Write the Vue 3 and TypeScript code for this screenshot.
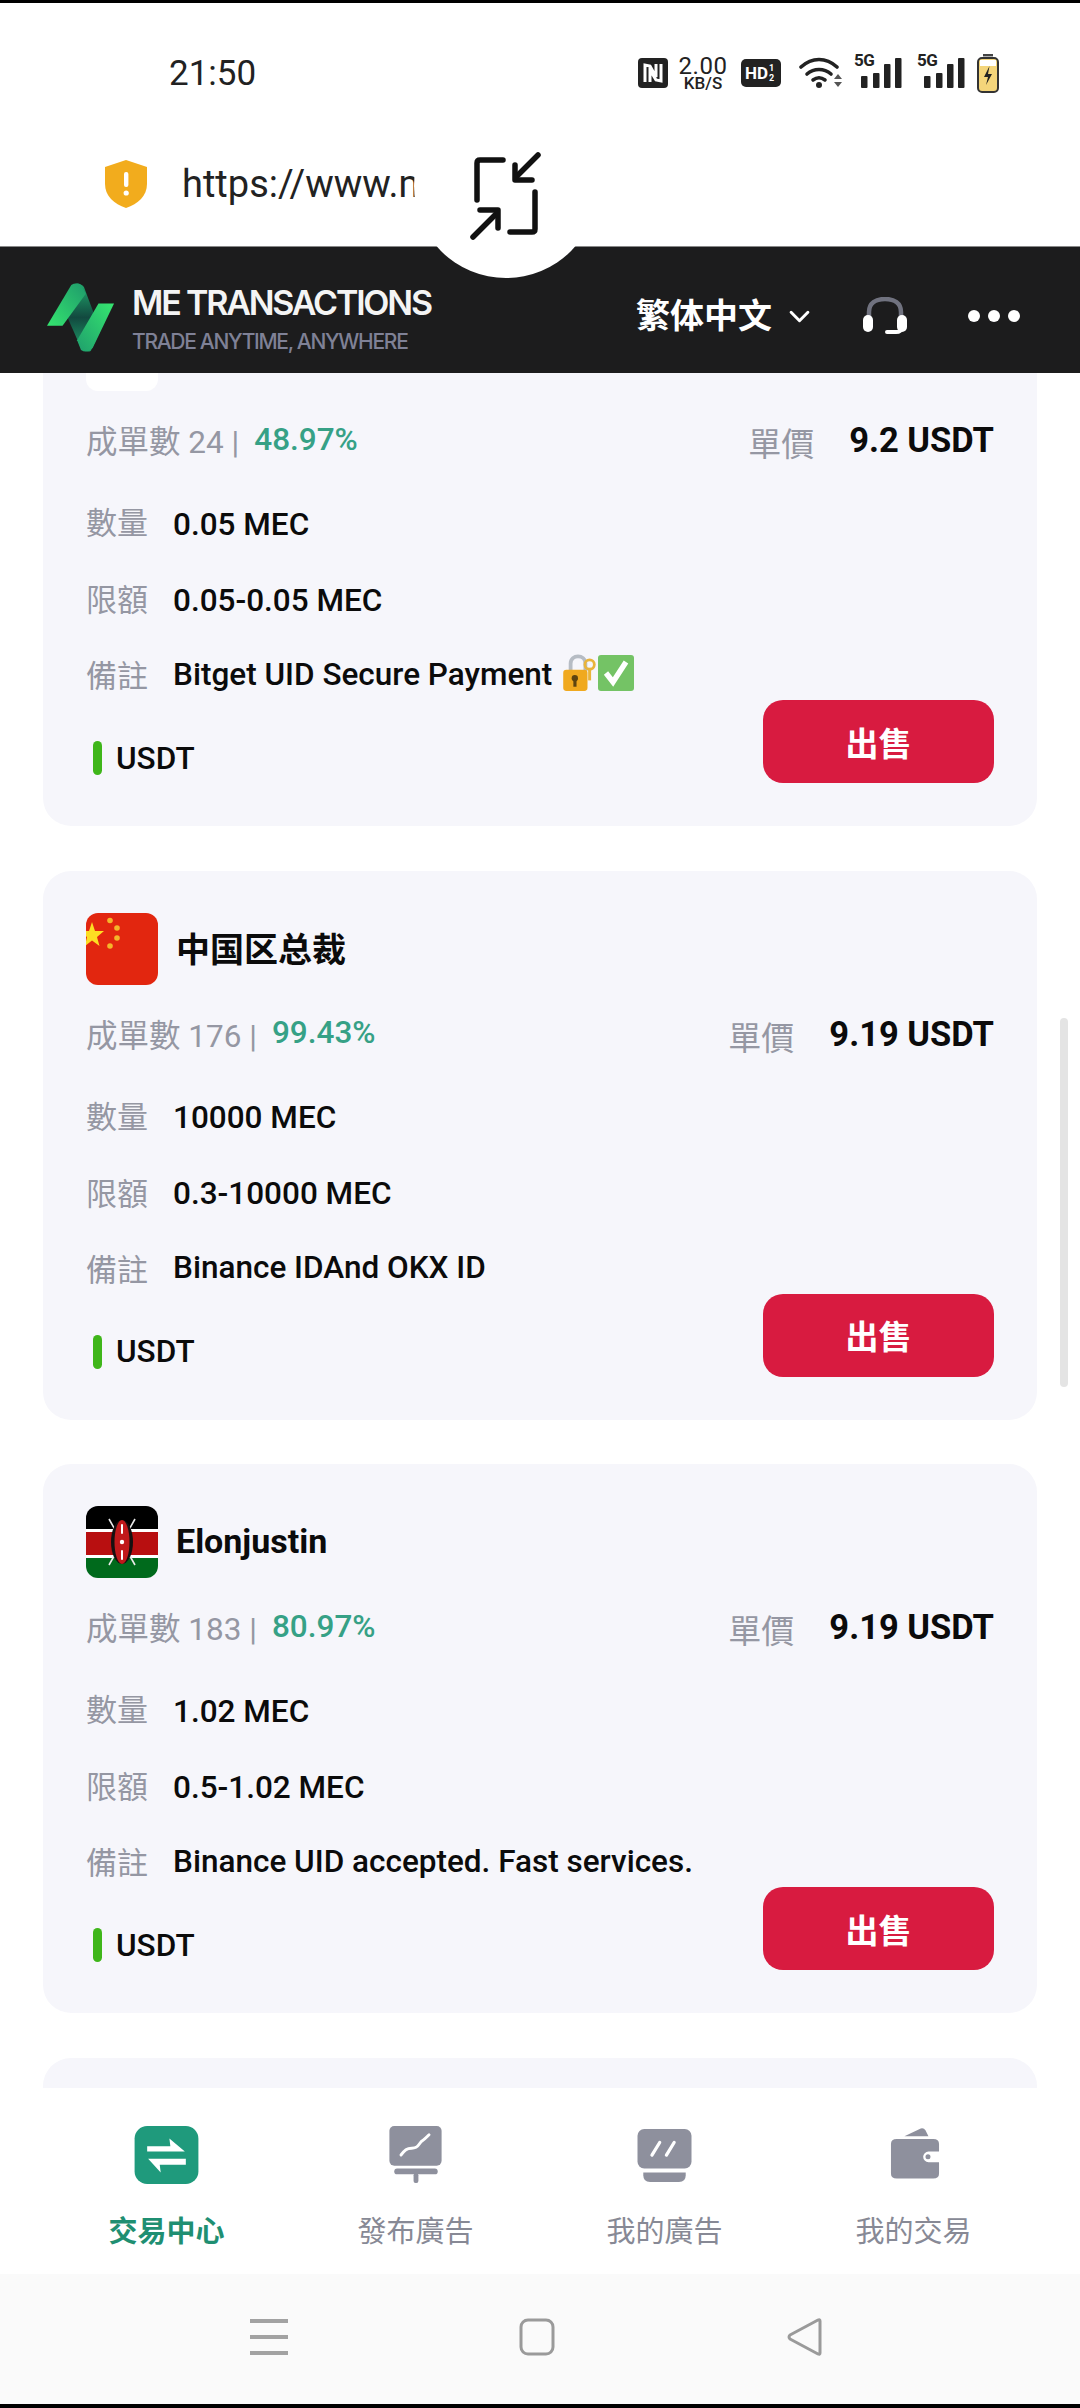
<script setup lang="ts">
interface Offer {
  name: string
  flag: 'blank' | 'cn' | 'ke'
  orders: number
  rate: string
  price: string
  amount: string
  limit: string
  note: string
  secure?: boolean
}

const offers: Offer[] = [
  { name: '', flag: 'blank', orders: 24, rate: '48.97%', price: '9.2 USDT', amount: '0.05 MEC', limit: '0.05-0.05 MEC', note: 'Bitget UID Secure Payment', secure: true },
  { name: '中国区总裁', flag: 'cn', orders: 176, rate: '99.43%', price: '9.19 USDT', amount: '10000 MEC', limit: '0.3-10000 MEC', note: 'Binance IDAnd OKX ID' },
  { name: 'Elonjustin', flag: 'ke', orders: 183, rate: '80.97%', price: '9.19 USDT', amount: '1.02 MEC', limit: '0.5-1.02 MEC', note: 'Binance UID accepted. Fast services.' },
]

const tabs = ['交易中心', '發布廣告', '我的廣告', '我的交易']
</script>

<template>
  <div class="screen">
    <div class="status-bar">
      <span class="clock">21:50</span>
      <div class="status-icons">
        <svg class="i-nfc" viewBox="0 0 30 30">
          <rect width="30" height="30" rx="4" fill="#222" />
          <path d="M7 24V7l5 1 6 11V6m5 0v17l-5-1-6-10v12" fill="none" stroke="#fff" stroke-width="3" />
        </svg>
        <div class="speed"><b>2.00</b><small>KB/S</small></div>
        <div class="hd">HD<span class="hd-sub">1<br />2</span></div>
        <svg class="i-wifi" viewBox="0 0 44 32">
          <g fill="none" stroke="#222" stroke-width="3.6" stroke-linecap="round">
            <path d="M2 10c11-10 25-10 36 0" />
            <path d="M8 17c7-6 17-6 24 0" />
            <path d="M14 23c4-3 8-3 12 0" />
          </g>
          <circle cx="20" cy="28" r="3" fill="#222" />
          <path d="M35 22l4-5 4 5zM35 25l4 5 4-5z" fill="#555" />
        </svg>
        <div v-for="n in 2" :key="n" class="signal">
          <span class="five-g">5G</span>
          <svg class="i-bars" viewBox="0 0 44 32">
            <rect x="3" y="19" width="6.5" height="12" rx="1" fill="#222" />
            <rect x="15" y="16" width="6.5" height="15" rx="1" fill="#222" />
            <rect x="26" y="7" width="6.5" height="24" rx="1" fill="#222" />
            <rect x="37" y="1" width="6.5" height="30" rx="1" fill="#222" />
          </svg>
        </div>
        <svg class="i-battery" viewBox="0 0 22 39">
          <rect x="6" y="0" width="10" height="2.4" fill="#444" />
          <rect x="1" y="4" width="20" height="34" rx="4" fill="#f4d57a" stroke="#333" stroke-width="2" />
          <rect x="3" y="6" width="16" height="6" fill="#fff" />
          <path d="M12.5 12L7 23h4l-2 8 6-11h-4z" fill="#222" />
        </svg>
      </div>
    </div>

    <div class="url-bar">
      <svg class="i-shield" viewBox="0 0 44 50">
        <path d="M22 1l21 7v17c0 12-9 20-21 24C10 45 1 37 1 25V8z" fill="#f2ac1d" />
        <rect x="20" y="13" width="4.4" height="15" rx="2" fill="#fff" />
        <circle cx="22.2" cy="34" r="2.6" fill="#fff" />
      </svg>
      <span class="url">https://www.me-transactions.com</span>
    </div>

    <header class="top-nav">
      <div class="brand">
        <svg class="i-logo" viewBox="0 0 70 74">
          <defs>
            <linearGradient id="logoA" x1="0" y1="1" x2="1" y2="0">
              <stop offset="0" stop-color="#34e56f" />
              <stop offset="1" stop-color="#1f9a6b" />
            </linearGradient>
            <linearGradient id="logoB" x1="0" y1="0" x2="0" y2="1">
              <stop offset="0" stop-color="#20a86c" />
              <stop offset="0.5" stop-color="#12493f" />
              <stop offset="1" stop-color="#1fa26b" />
            </linearGradient>
            <linearGradient id="logoC" x1="1" y1="0" x2="0" y2="1">
              <stop offset="0" stop-color="#36e670" />
              <stop offset="1" stop-color="#1f9f6c" />
            </linearGradient>
          </defs>
          <path d="M26 3Q33-1 38 5L55 50 45 71Q40 73 35 68L16 25z" fill="url(#logoB)" />
          <path d="M0 45L25 3Q30 0 35 3L40 12 16 45z" fill="url(#logoA)" />
          <path d="M53 22H69L47 68Q41 74 35 70L31 60z" fill="url(#logoC)" />
        </svg>
        <div class="brand-text">
          <div class="brand-name">ME TRANSACTIONS</div>
          <div class="brand-sub">TRADE ANYTIME, ANYWHERE</div>
        </div>
      </div>
      <div class="nav-right">
        <span class="lang">繁体中文</span>
        <svg class="i-chev" viewBox="0 0 20 12">
          <path d="M2 2l8 8 8-8" fill="none" stroke="#fff" stroke-width="2.8" stroke-linecap="round" stroke-linejoin="round" />
        </svg>
        <svg class="i-headset" viewBox="0 0 44 38">
          <path d="M6 20V15C6 6 13 2 22 2s16 4 16 13v5" fill="none" stroke="#70727f" stroke-width="4.5" />
          <rect x="0" y="18" width="10" height="17" rx="5" fill="#fff" />
          <rect x="34" y="18" width="10" height="17" rx="5" fill="#fff" />
          <path d="M38 31q0 4-5 4H24" fill="none" stroke="#fff" stroke-width="4" stroke-linecap="round" />
        </svg>
        <div class="dots"><i /><i /><i /></div>
      </div>
    </header>

    <div class="notch">
      <svg class="i-collapse" viewBox="0 0 72 88">
        <g fill="none" stroke="#111" stroke-width="5.5" stroke-linecap="round" stroke-linejoin="round">
          <path d="M7 48V11q0-3 3-3h23" />
          <path d="M68 3L46 25" />
          <path d="M45 13v15h17" />
          <path d="M65 40v37q0 3-3 3H40" />
          <path d="M3 85l24-24" />
          <path d="M10 58h18v18" />
        </g>
      </svg>
    </div>

    <main class="list">
      <article v-for="o in offers" :key="o.orders" class="card">
        <div class="card-head">
          <div class="flag" :class="'flag-' + o.flag">
            <svg v-if="o.flag === 'cn'" viewBox="0 0 72 72">
              <rect width="72" height="72" fill="#e2260f" />
              <polygon points="6,9 9,18 18,18 11,24 13.5,33 6,27.5 -1,33 1,24 -6,18 3,18" fill="#fdde23" />
              <g fill="#f5b52a">
                <circle cx="24" cy="7.5" r="2.8" />
                <circle cx="31" cy="15" r="2.8" />
                <circle cx="31" cy="25" r="2.8" />
                <circle cx="24" cy="33" r="2.8" />
              </g>
            </svg>
            <svg v-else-if="o.flag === 'ke'" viewBox="0 0 72 72">
              <rect width="72" height="25" fill="#000" />
              <rect y="25" width="72" height="25" fill="#b80f10" />
              <rect y="50" width="72" height="22" fill="#006a1c" />
              <rect y="23" width="72" height="3" fill="#fff" />
              <rect y="49" width="72" height="3" fill="#fff" />
              <path d="M23 13l26 46M49 13L23 59" stroke="#e9e9e9" stroke-width="1.6" />
              <ellipse cx="36" cy="36" rx="11" ry="22" fill="#161010" />
              <ellipse cx="36" cy="36" rx="7.5" ry="22" fill="#c1191b" />
              <g fill="#fff">
                <rect x="35" y="18" width="2" height="10" rx="1" />
                <circle cx="36" cy="36" r="2.2" />
                <rect x="35" y="44" width="2" height="10" rx="1" />
              </g>
            </svg>
          </div>
          <span class="name">{{ o.name }}</span>
        </div>

        <div class="stats">
          <div class="orders">
            <span>成單數 {{ o.orders }} |</span>
            <span class="rate">{{ o.rate }}</span>
          </div>
          <div class="price">
            <span class="label price-label">單價</span>
            <span class="price-val">{{ o.price }}</span>
          </div>
        </div>

        <div class="row row-amount"><span class="label">數量</span><span class="val">{{ o.amount }}</span></div>
        <div class="row row-limit"><span class="label">限額</span><span class="val">{{ o.limit }}</span></div>
        <div class="row row-note">
          <span class="label">備註</span>
          <span class="val">{{ o.note }}</span>
          <template v-if="o.secure">
            <svg class="emoji" viewBox="0 0 34 36">
              <path d="M10 16V9c0-9 14-9 14 0v7" fill="none" stroke="#b6bcc4" stroke-width="3.6" />
              <rect x="3" y="15" width="23" height="20" rx="3" fill="#f0a91f" />
              <circle cx="14" cy="23" r="3" fill="#5d4410" />
              <rect x="12.6" y="24" width="3" height="7" fill="#5d4410" />
              <circle cx="28" cy="10" r="4.5" fill="none" stroke="#e9b43a" stroke-width="2.6" />
              <rect x="26.6" y="13" width="2.8" height="12" fill="#e9b43a" />
            </svg>
            <svg class="emoji" viewBox="0 0 36 36">
              <rect width="36" height="36" rx="3" fill="#74c365" />
              <path d="M8 18l7 9 13-20" fill="none" stroke="#fff" stroke-width="5.4" />
            </svg>
          </template>
        </div>

        <div class="card-foot">
          <div class="coin"><i class="coin-bar" /><span>USDT</span></div>
          <button class="sell" type="button">出售</button>
        </div>
      </article>
      <article class="card" />
      <div class="scroll-thumb" />
    </main>

    <nav class="tabs">
      <div v-for="(t, i) in tabs" :key="t" class="tab" :class="{ active: i === 0 }">
        <div class="tab-icon">
          <svg v-if="i === 0" viewBox="0 0 66 60" class="i-swap">
            <rect width="66" height="60" rx="13" fill="#1f9a7c" />
            <path d="M13 21H37L36 13 52 26.5H13z" fill="#fff" />
            <path d="M53 34H14L27 48 26 40H53z" fill="#fff" />
          </svg>
          <svg v-else-if="i === 1" viewBox="0 0 54 60" class="i-chart">
            <rect width="54" height="41" rx="5" fill="#8e909d" />
            <path d="M12 30c4-5 6-7 11-7 7 0 7-4 10-7 3-2 5-4 8-7" fill="none" stroke="#fff" stroke-width="3" stroke-linecap="round" />
            <rect x="5" y="44" width="45" height="6" rx="3" fill="#8e909d" />
            <rect x="25" y="49" width="5" height="10" rx="2" fill="#8e909d" />
          </svg>
          <svg v-else-if="i === 2" viewBox="0 0 56 56" class="i-monitor">
            <rect width="56" height="41" rx="7" fill="#8e909d" />
            <path d="M15 27l8-13M30 27l8-13" fill="none" stroke="#fff" stroke-width="3.4" stroke-linecap="round" />
            <path d="M6 45h44v3q0 7-7 7H13q-7 0-7-7z" fill="#8e909d" />
          </svg>
          <svg v-else viewBox="0 0 52 54" class="i-wallet">
            <path d="M15 9L32 1q3-1 5 2l3 6z" fill="#8e909d" />
            <path d="M7 12h38q6 0 6 5v8H40a5.5 5.5 0 0 0 0 11h11v12q0 5-6 5H7q-6 0-6-5V17q0-5 6-5z" fill="#8e909d" />
            <circle cx="39.5" cy="30.5" r="2.6" fill="#8e909d" />
          </svg>
        </div>
        <span class="tab-label">{{ t }}</span>
      </div>
    </nav>

    <div class="sys-nav">
      <svg viewBox="0 0 38 38" class="i-sys">
        <path d="M0 3h38M0 19h38M0 35h38" stroke="#a2a2a2" stroke-width="4" />
      </svg>
      <svg viewBox="0 0 36 38" class="i-sys">
        <rect x="2" y="2" width="32" height="34" rx="7" fill="none" stroke="#9a9a9a" stroke-width="3" />
      </svg>
      <svg viewBox="0 0 36 38" class="i-sys">
        <path d="M33 3v32q0 2-2 1L3 21q-2-2 0-4L31 2q2-1 2 1z" fill="none" stroke="#9a9a9a" stroke-width="3" stroke-linejoin="round" />
      </svg>
    </div>
  </div>
</template>

<style scoped>
.screen{
  position:relative;
  width:1080px; height:2408px;
  display:flex; flex-direction:column;
  overflow:hidden;
  background:#fff;
  border-top:3px solid #000;
  border-bottom:4px solid #000;
  box-sizing:border-box;
  font-family:Roboto,"Noto Sans CJK TC",sans-serif;
}
.status-bar{
  height:118px; flex:none;
  display:flex; align-items:center; justify-content:space-between;
  padding:22px 81px 0 169px;
  box-sizing:border-box;
}
.clock{ font-size:35px; color:#222; }
.status-icons{ display:flex; align-items:center; }
.i-nfc{ width:30px; height:30px; }
.speed{ display:flex; flex-direction:column; align-items:center; width:50px; margin-left:10px; color:#222; }
.speed b{ font-size:24px; line-height:20px; font-weight:400; letter-spacing:.5px; }
.speed small{ font-size:17px; line-height:15px; font-weight:500; }
.hd{
  display:flex; align-items:center;
  width:40px; height:28px; margin-left:13px;
  background:#222; color:#fff; border-radius:5px;
  font-size:17px; font-weight:700; padding-left:4px; box-sizing:border-box;
}
.hd-sub{ font-size:9px; line-height:10px; margin-left:1px; }
.i-wifi{ width:44px; height:32px; margin-left:18px; }
.signal{ position:relative; width:46px; height:32px; margin-left:15px; }
.five-g{ position:absolute; left:-4px; top:-5px; font-size:17px; line-height:17px; font-weight:700; color:#222; letter-spacing:-.5px; }
.i-bars{ width:44px; height:32px; display:block; }
.signal + .signal{ margin-left:17px; }
.i-battery{ width:22px; height:39px; margin-left:10px; }

.url-bar{
  height:125px; flex:none;
  display:flex; align-items:center;
  padding:0 0 0 104px;
  box-sizing:border-box;
}
.i-shield{ width:44px; height:50px; flex:none; }
.url{
  width:241px; margin-left:34px;
  overflow:hidden; white-space:nowrap;
  font-size:38px; color:#222;
}

.top-nav{
  height:127px; flex:none;
  display:flex; align-items:center; justify-content:space-between;
  background:#1c1c1d;
  padding:0 60px 0 47px;
  box-sizing:border-box;
  border-top:1px solid #888;
  position:relative; z-index:2;
}
.brand{ display:flex; align-items:center; gap:17px; padding-top:16px; }
.i-logo{ width:68px; height:72px; flex:none; }
.brand-text{ display:flex; flex-direction:column; margin-top:4px; }
.brand-name{ font-family:Inter,sans-serif; font-size:34px; line-height:38px; font-weight:600; color:#f4f4f4; letter-spacing:-2.2px; white-space:nowrap; }
.brand-sub{ font-family:Inter,sans-serif; font-size:21px; line-height:28px; margin-top:6px; font-weight:500; color:#7f8196; letter-spacing:-1.3px; white-space:nowrap; }
.nav-right{ display:flex; align-items:center; padding-top:12px; }
.lang{ font-size:34px; font-weight:700; color:#fff; position:relative; top:-3px; }
.i-chev{ width:21px; height:13px; margin-left:17px; }
.i-headset{ width:44px; height:38px; margin-left:53px; }
.dots{ display:flex; gap:8px; margin-left:61px; }
.dots i{ width:12px; height:12px; border-radius:50%; background:#fff; }

.notch{
  position:absolute; z-index:3;
  left:414px; top:91px;
  width:184px; height:184px;
  border-radius:50%;
  background:#fff;
  display:flex; justify-content:center;
}
.i-collapse{ width:72px; height:88px; margin-top:58px; }

.list{
  flex:1; min-height:0;
  overflow:hidden;
  position:relative;
  padding:0 43px;
  display:flex; flex-direction:column; gap:44.5px;
}
.card{
  flex:none;
  height:549px;
  background:#f6f6fb;
  border-radius:28px;
  padding:42px 43px 42px;
  box-sizing:border-box;
  display:flex; flex-direction:column;
}
.card:first-child{ margin-top:-96px; }
.card-head{ display:flex; align-items:center; gap:18px; height:72px; }
.flag{ width:72px; height:72px; border-radius:12px; overflow:hidden; flex:none; }
.flag svg{ display:block; width:100%; height:100%; }
.flag-blank{ background:#fff; }
.name{ font-size:34px; font-weight:700; color:#0b0b0b; position:relative; top:-1px; }
.label{ font-size:31px; color:#9597a3; line-height:44px; }
.stats{ display:flex; justify-content:space-between; align-items:center; height:44px; margin-top:29px; }
.orders{ display:flex; align-items:center; gap:15px; font-size:31.5px; color:#9597a3; position:relative; top:-3px; }
.rate{ color:#36a186; font-size:31.5px; font-weight:500; }
.price{ display:flex; align-items:center; gap:35px; }
.price-label{ font-size:33px; position:relative; top:3px; }
.price-val{ font-size:34.5px; font-weight:700; color:#0b0b0b; position:relative; top:-2px; }
.row{ display:flex; align-items:center; height:44px; }
.row-amount{ margin-top:38px; }
.row-limit{ margin-top:33px; }
.row-note{ margin-top:31px; }
.row-note .label{ position:relative; top:1px; }
.row-note .val{ position:relative; top:-2px; }
.row-limit .val{ position:relative; top:-1px; }
.val{ font-size:31.5px; font-weight:500; color:#0b0b0b; margin-left:25px; }
.emoji{ width:36px; height:38px; margin-left:8px; position:relative; top:-3px; }
.emoji + .emoji{ margin-left:2px; }
.card-foot{ display:flex; justify-content:space-between; align-items:flex-end; height:83px; margin-top:2px; }
.coin{ display:flex; align-items:center; height:44px; padding-bottom:3px; margin-left:7px; font-size:31.5px; font-weight:500; color:#0b0b0b; }
.coin-bar{ width:9px; height:34px; border-radius:5px; background:#3fb61a; margin-right:14px; }
.sell{
  width:231px; height:83px;
  border:none; border-radius:20px;
  background:#d81b40; color:#fff;
  font-family:inherit; font-size:33px; font-weight:700;
}
.scroll-thumb{
  position:absolute;
  right:12px; top:645px;
  width:8px; height:369px;
  border-radius:4px;
  background:#e4e4e4;
}

.tabs{
  height:186px; flex:none;
  display:grid; grid-template-columns:repeat(4,249px);
  padding:0 0 0 42px;
  background:#fff;
}
.tab{ display:flex; flex-direction:column; align-items:center; padding-top:38px; }
.tab-icon{ height:60px; display:flex; align-items:flex-start; justify-content:center; }
.i-swap{ width:65px; height:58px; }
.i-chart{ width:53px; height:58px; }
.i-monitor{ width:55px; height:54px; margin-top:3px; }
.i-wallet{ width:50px; height:53px; margin-top:1px; margin-left:3px; }
.tab-label{ margin-top:26px; font-size:29px; line-height:40px; color:#878995; }
.tab.active .tab-label{ color:#1f8f72; font-weight:700; }

.sys-nav{
  height:130px; flex:none;
  display:flex; align-items:center; justify-content:center; gap:230px;
  background:#fafafa;
  padding:0 6px 4px 0; box-sizing:border-box;
}
.i-sys{ width:38px; height:38px; }
</style>
